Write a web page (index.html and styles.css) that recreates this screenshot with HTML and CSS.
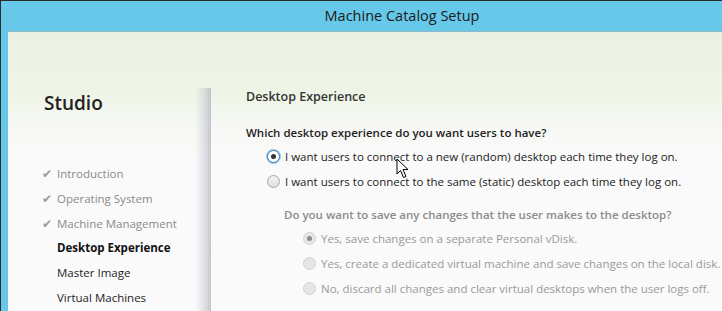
FILE: index.html
```html
<!DOCTYPE html>
<html lang="en">
<head>
    <meta charset="UTF-8">
    <title>Machine Catalog Setup</title>
    <link rel="stylesheet" href="styles.css">
</head>
<body>
    <div class="window">
        <div class="titlebar">Machine Catalog Setup</div>
        <div class="frame">
            <div class="sidebar">
                <h1 class="brand">Studio</h1>
                <ul class="steps">
                    <li class="step done"><span class="check">&#10004;</span>Introduction</li>
                    <li class="step done"><span class="check">&#10004;</span>Operating System</li>
                    <li class="step done"><span class="check">&#10004;</span>Machine Management</li>
                    <li class="step current">Desktop Experience</li>
                    <li class="step">Master Image</li>
                    <li class="step">Virtual Machines</li>
                </ul>
            </div>
            <div class="content">
                <h2 class="page-title">Desktop Experience</h2>
                <p class="question">Which desktop experience do you want users to have?</p>
                <div class="options">
                    <label class="option"><span class="radio checked"></span>I want users to connect to a new (random) desktop each time they log on.</label>
                    <label class="option"><span class="radio"></span>I want users to connect to the same (static) desktop each time they log on.</label>
                </div>
                <div class="sub">
                    <p class="question muted">Do you want to save any changes that the user makes to the desktop?</p>
                    <div class="options">
                        <label class="option muted"><span class="radio checked disabled"></span>Yes, save changes on a separate Personal vDisk.</label>
                        <label class="option muted"><span class="radio disabled"></span>Yes, create a dedicated virtual machine and save changes on the local disk.</label>
                        <label class="option muted"><span class="radio disabled"></span>No, discard all changes and clear virtual desktops when the user logs off.</label>
                    </div>
                </div>
                <svg class="cursor" width="14" height="22" viewBox="0 0 14 22">
                    <path d="M1 1 L1 16 L4.5 12.5 L7.5 19.5 L10 18.5 L7 11.5 L12 11.5 Z" fill="#fff" stroke="#000" stroke-width="1"/>
                </svg>
            </div>
        </div>
    </div>
</body>
</html>
```

FILE: styles.css
```css
html, body {
    margin: 0;
    height: 100%;
    overflow: hidden;
}
body {
    font-family: "Open Sans", "Noto Sans", sans-serif;
    background: #2b2b2b;
}
.window {
    height: 100%;
    margin: 1px 0 0 1px;
    background: #66c9ea;
    padding-left: 7px;
    display: flex;
    flex-direction: column;
}
.titlebar {
    height: 30px;
    line-height: 30px;
    text-align: center;
    font-size: 14.5px;
    color: #1a1a1a;
    padding-left: 74px;
    border-bottom: 1px solid #8fb8c6;
}
.frame {
    flex: 1;
    display: flex;
    background: linear-gradient(to bottom, #eaf1e2 0px, #eef5e6 60px, #f7f8f5 95px, #fafafa 130px);
}
.sidebar {
    width: 203px;
    position: relative;
}
.sidebar::after {
    content: "";
    position: absolute;
    top: 56px;
    right: 0;
    bottom: 0;
    width: 16px;
    background: linear-gradient(to right, rgba(200,204,210,0), rgba(190,195,202,0.55) 70%, rgba(175,181,189,0.75));
}
.brand {
    margin: 60px 0 0 36px;
    font-size: 19px;
    font-weight: 600;
    color: #222;
    line-height: 22px;
}
.steps {
    list-style: none;
    margin: 48px 0 0 0;
    padding: 0 0 0 35px;
}
.step {
    position: relative;
    height: 24.8px;
    line-height: 24.8px;
    font-size: 11.5px;
    color: #1e1e1e;
    padding-left: 14px;
}
.step.done {
    color: #8a8a8a;
}
.check {
    position: absolute;
    left: -1px;
    font-size: 12px;
    color: #9a9a9a;
}
.step.current {
    font-weight: 700;
    color: #111;
}
.step.current::after {
    content: "";
    position: absolute;
    right: -1px;
    top: 7px;
    border-style: solid;
    border-width: 6px 6px 6px 0;
    border-color: transparent #fff transparent transparent;
}
.content {
    flex: 1;
    position: relative;
    padding-left: 35px;
}
.page-title {
    margin: 57px 0 0 0;
    font-size: 12.5px;
    font-weight: 600;
    color: #333;
    line-height: 16px;
}
.question {
    margin: 20px 0 0 0;
    font-size: 11.5px;
    font-weight: 600;
    color: #1e1e1e;
    line-height: 16px;
}
.question.muted {
    color: #8c8c8c;
    margin-top: 0;
}
.options {
    padding-left: 21px;
    margin-top: 3px;
}
.option {
    display: flex;
    align-items: center;
    height: 25px;
    font-size: 11.5px;
    color: #222;
}
.option.muted {
    color: #999;
}
.radio {
    width: 11px;
    height: 11px;
    border-radius: 50%;
    border: 1px solid #a8a8a8;
    background: linear-gradient(#f4f4f4, #dedede);
    margin-right: 5px;
    position: relative;
    flex: none;
}
.radio.checked {
    border-color: #3c7fb1;
    box-shadow: 0 0 0 1px #9cc6e8;
    background: #fff;
}
.radio.checked::after {
    content: "";
    position: absolute;
    left: 3px;
    top: 3px;
    width: 5px;
    height: 5px;
    border-radius: 50%;
    background: #333;
}
.radio.disabled {
    border-color: #d2d2d2;
    background: #e6e6e6;
    box-shadow: none;
}
.radio.checked.disabled::after {
    background: #8a8a8a;
}
.sub {
    padding-left: 38px;
    margin-top: 13px;
}
.sub .options {
    padding-left: 19px;
}
.cursor {
    position: absolute;
    left: 185px;
    top: 126px;
}
```
